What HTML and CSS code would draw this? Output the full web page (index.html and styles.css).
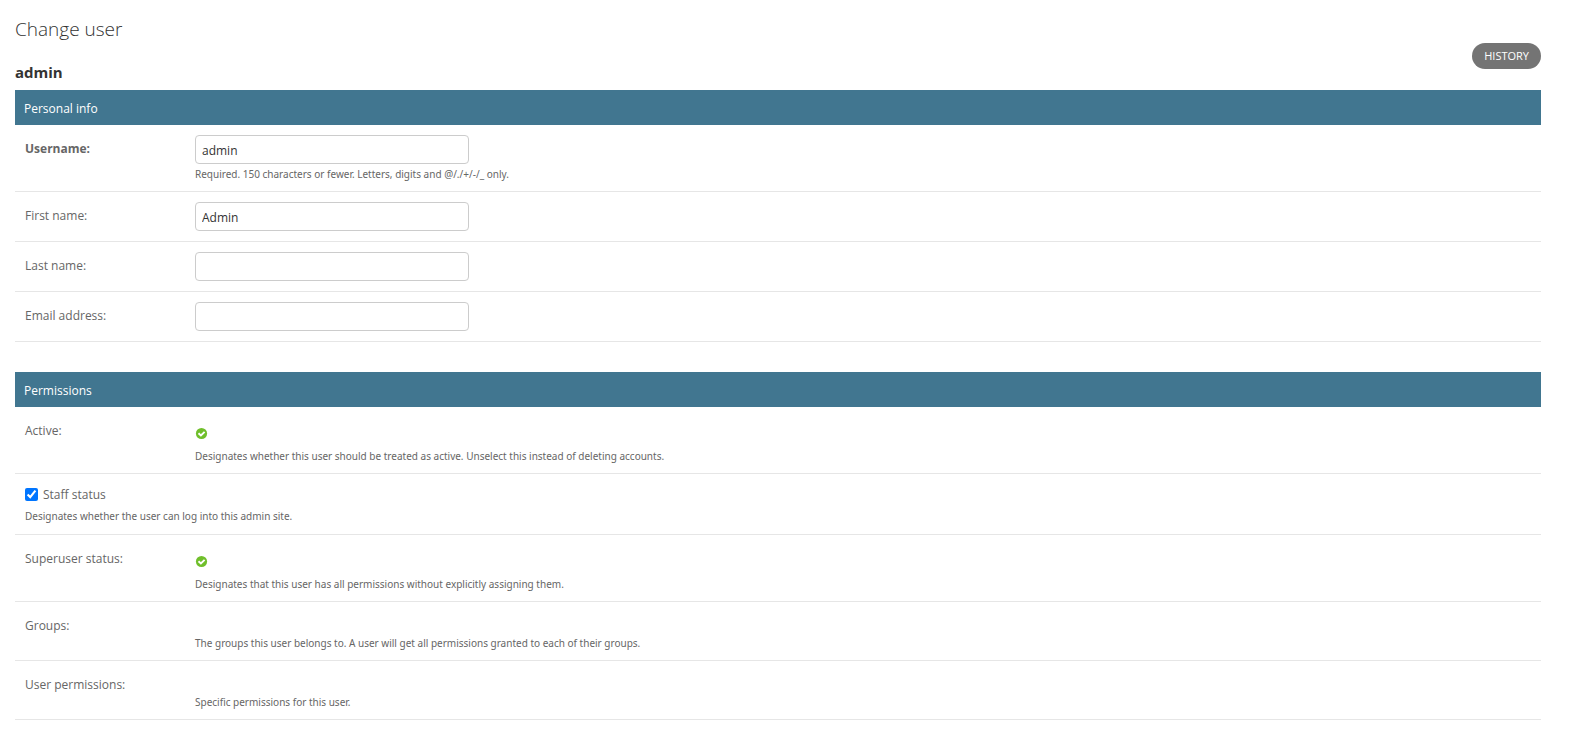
FILE: index.html
```html
<!DOCTYPE html>
<html lang="en">
<head>
  <meta charset="UTF-8">
  <meta name="viewport" content="width=device-width, initial-scale=1.0">
  <title>Change user</title>
  <link rel="stylesheet" href="styles.css">
</head>
<body>

  <main id="content">
    <h1>Change user</h1>

    <div class="object-header">
      <h2>admin</h2>
      <a href="history/" class="history-link">History</a>
    </div>

    <form method="post">

      <!-- Personal info -->
      <section class="module">
        <h2>Personal info</h2>

        <div class="form-row">
          <label class="required" for="id_username">Username:</label>
          <div class="field">
            <input type="text" id="id_username" name="username" value="admin" maxlength="150" required>
            <p class="help">Required. 150 characters or fewer. Letters, digits and @/./+/-/_ only.</p>
          </div>
        </div>

        <div class="form-row">
          <label for="id_first_name">First name:</label>
          <div class="field">
            <input type="text" id="id_first_name" name="first_name" value="Admin">
          </div>
        </div>

        <div class="form-row">
          <label for="id_last_name">Last name:</label>
          <div class="field">
            <input type="text" id="id_last_name" name="last_name">
          </div>
        </div>

        <div class="form-row">
          <label for="id_email">Email address:</label>
          <div class="field">
            <input type="email" id="id_email" name="email">
          </div>
        </div>
      </section>

      <!-- Permissions -->
      <section class="module">
        <h2>Permissions</h2>

        <div class="form-row">
          <span class="label">Active:</span>
          <div class="field">
            <div class="readonly">
              <svg class="icon-yes" viewBox="0 0 13 13" role="img" aria-label="True">
                <circle cx="6.5" cy="6.5" r="5.6" fill="#70bf2b"/>
                <path d="M3.5 6.2l2.4 2.3 3.7-3.7" fill="none" stroke="#fff" stroke-width="1.9"/>
              </svg>
            </div>
            <p class="help">Designates whether this user should be treated as active. Unselect this instead of deleting accounts.</p>
          </div>
        </div>

        <div class="form-row checkbox-row">
          <div class="checkbox">
            <input type="checkbox" id="id_is_staff" name="is_staff" checked>
            <label for="id_is_staff">Staff status</label>
          </div>
          <p class="help">Designates whether the user can log into this admin site.</p>
        </div>

        <div class="form-row">
          <span class="label">Superuser status:</span>
          <div class="field">
            <div class="readonly">
              <svg class="icon-yes" viewBox="0 0 13 13" role="img" aria-label="True">
                <circle cx="6.5" cy="6.5" r="5.6" fill="#70bf2b"/>
                <path d="M3.5 6.2l2.4 2.3 3.7-3.7" fill="none" stroke="#fff" stroke-width="1.9"/>
              </svg>
            </div>
            <p class="help">Designates that this user has all permissions without explicitly assigning them.</p>
          </div>
        </div>

        <div class="form-row">
          <span class="label">Groups:</span>
          <div class="field">
            <div class="readonly empty"></div>
            <p class="help">The groups this user belongs to. A user will get all permissions granted to each of their groups.</p>
          </div>
        </div>

        <div class="form-row">
          <span class="label">User permissions:</span>
          <div class="field">
            <div class="readonly empty"></div>
            <p class="help">Specific permissions for this user.</p>
          </div>
        </div>
      </section>

    </form>
  </main>

</body>
</html>
```
FILE: styles.css
```css
* {
  box-sizing: border-box;
}

body {
  margin: 0;
  background: #fff;
  color: #333;
  font-family: "Segoe UI", "Open Sans", "Noto Sans", sans-serif;
  font-size: 12px;
}

#content {
  padding: 16px 32px 24px 15px;
}

h1, h2, p {
  margin: 0;
}

h1 {
  font-size: 19px;
  font-weight: 300;
  line-height: 26px;
}

.object-header {
  display: flex;
  justify-content: space-between;
  align-items: flex-start;
  height: 48px;
}

.object-header h2 {
  padding-top: 20px;
  font-size: 15px;
  font-weight: 700;
  line-height: 20px;
}

.history-link {
  margin-top: 1px;
  padding: 0 12px;
  border-radius: 15px;
  background: #747474;
  color: #fff;
  font-size: 11px;
  line-height: 26px;
  text-decoration: none;
  text-transform: uppercase;
}

.module {
  margin-bottom: 30px;
}

.module h2 {
  padding: 2px 9px 0;
  background: #417690;
  color: #fff;
  font-size: 12px;
  font-weight: 400;
  line-height: 33px;
}

.form-row {
  display: flex;
  padding: 10px;
  border-bottom: 1px solid #e6e6e6;
}

.form-row > label,
.form-row > .label {
  flex: 0 0 170px;
  padding-top: 4px;
  color: #666;
  line-height: 20px;
}

.form-row > .required {
  font-weight: 700;
}

.field {
  flex: 1;
}

input[type="text"],
input[type="email"] {
  display: block;
  width: 274px;
  max-width: 100%;
  height: 29px;
  padding: 1px 6px 0;
  border: 1px solid #ccc;
  border-radius: 4px;
  background: #fff;
  color: #333;
  font-family: inherit;
  font-size: 12px;
}

.help {
  padding-top: 3px;
  color: #666;
  font-family: "Segoe UI", "Noto Sans", sans-serif;
  font-size: 10px;
  line-height: 13px;
}

input + .help {
  margin-top: 1px;
}

.readonly {
  height: 30px;
  padding-top: 10px;
}

.readonly.empty {
  height: 22px;
}

.icon-yes {
  display: block;
  width: 13px;
  height: 13px;
}

.checkbox-row {
  display: block;
  padding-bottom: 11px;
}

.checkbox {
  display: flex;
  align-items: center;
  gap: 5px;
  height: 20px;
  margin-bottom: 3px;
  color: #666;
}

.checkbox input {
  width: 13px;
  height: 13px;
  margin: 0;
}
```
